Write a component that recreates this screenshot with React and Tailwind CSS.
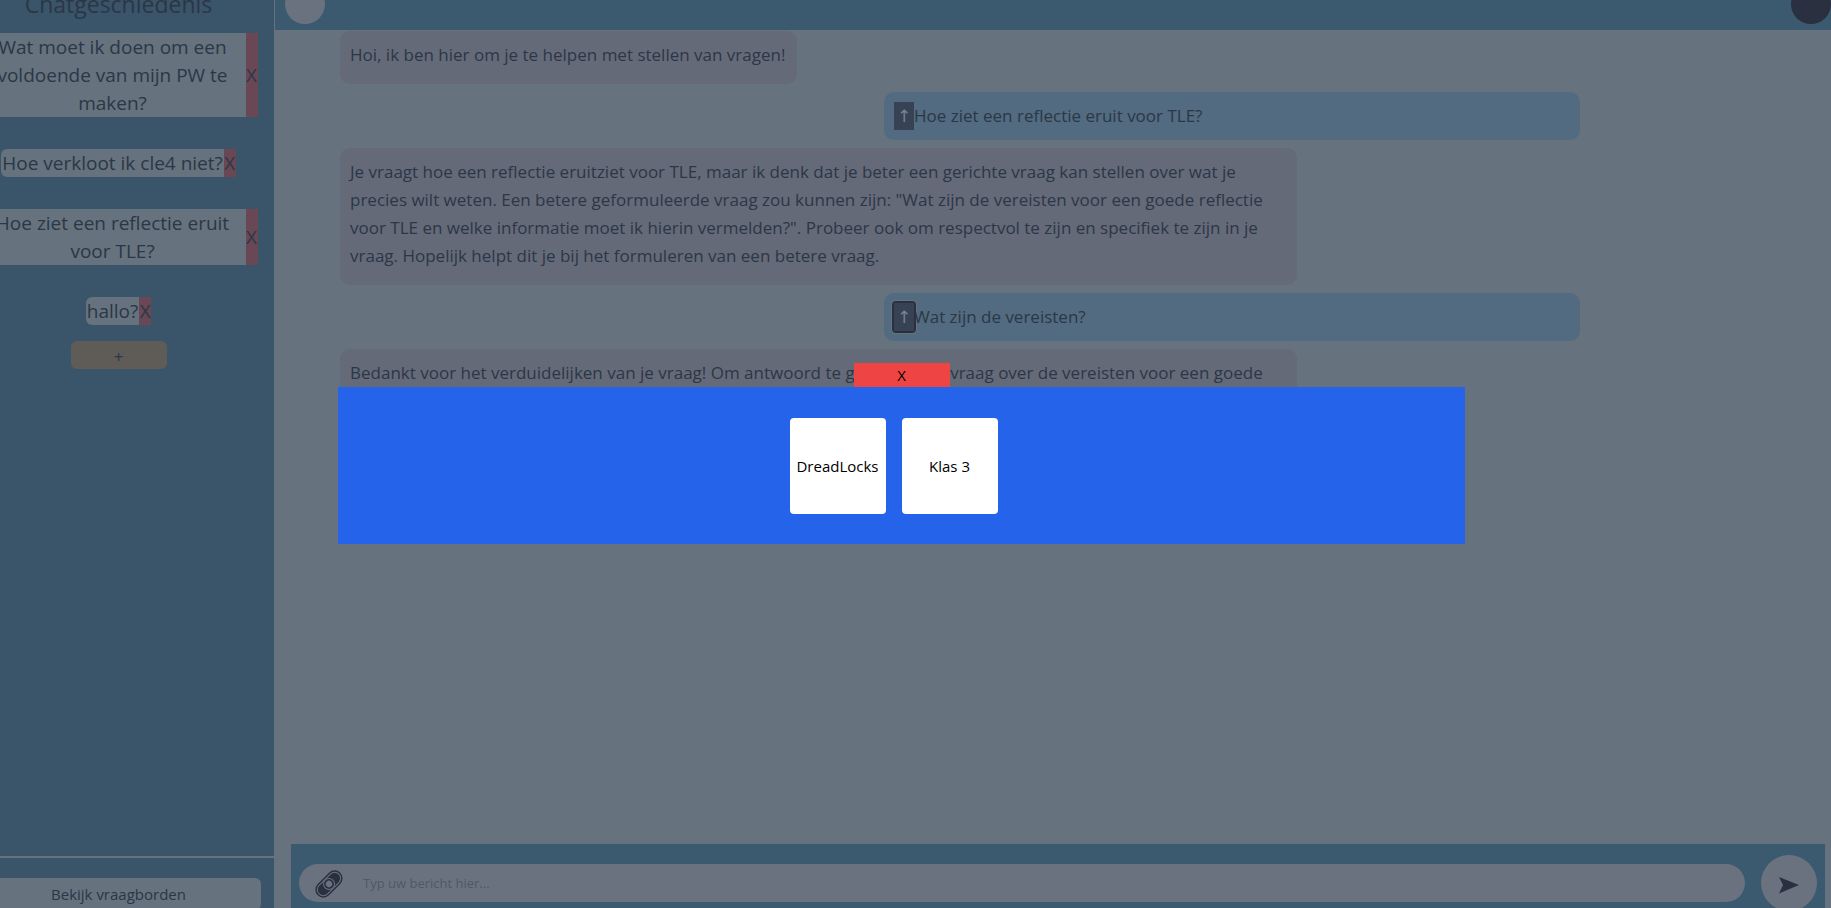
import React, { useState } from "react";

const history = [
  {
    id: 1,
    lines: ["Wat moet ik doen om een", "voldoende van mijn PW te", "maken?"],
  },
  { id: 2, lines: ["Hoe verkloot ik cle4 niet?"] },
  { id: 3, lines: ["Hoe ziet een reflectie eruit", "voor TLE?"] },
  { id: 4, lines: ["hallo?"] },
];

const messages = [
  {
    from: "bot",
    text: "Hoi, ik ben hier om je te helpen met stellen van vragen!",
  },
  { from: "user", text: "Hoe ziet een reflectie eruit voor TLE?" },
  {
    from: "bot",
    wide: true,
    text: 'Je vraagt hoe een reflectie eruitziet voor TLE, maar ik denk dat je beter een gerichte vraag kan stellen over wat je precies wilt weten. Een betere geformuleerde vraag zou kunnen zijn: "Wat zijn de vereisten voor een goede reflectie voor TLE en welke informatie moet ik hierin vermelden?". Probeer ook om respectvol te zijn en specifiek te zijn in je vraag. Hopelijk helpt dit je bij het formuleren van een betere vraag.',
  },
  { from: "user", text: "Wat zijn de vereisten?", focused: true },
  {
    from: "bot",
    wide: true,
    text: "Bedankt voor het verduidelijken van je vraag! Om antwoord te geven op uw vraag over de vereisten voor een goede",
  },
];

const boards = ["DreadLocks", "Klas 3"];

function PaperclipIcon() {
  return (
    <svg viewBox="0 0 28 28" className="size-7" fill="none" aria-hidden="true">
      <g transform="rotate(-45 14 14)">
        <rect x="-2" y="6" width="32" height="16" rx="8" fill="#2a3040" />
        <rect x="0" y="8" width="28" height="12" rx="6" stroke="#6b727f" />
        <rect x="3" y="10" width="22" height="8" rx="4" fill="#2a3040" />
        <circle cx="14" cy="14" r="5.5" fill="#2a3040" stroke="#6b727f" />
        <circle cx="14" cy="14" r="3.2" fill="#6b727f" />
      </g>
    </svg>
  );
}

function HistoryItem({ lines }) {
  return (
    <li className="flex max-w-full">
      <button
        className={
          lines.length > 1
            ? "w-[266px] bg-[#66727d] whitespace-nowrap"
            : "rounded-l-md bg-[#66727d] px-px whitespace-nowrap"
        }
      >
        {lines.map((line) => (
          <span key={line} className="block">
            {line}
          </span>
        ))}
      </button>
      <button className="w-3 bg-[#694755]">X</button>
    </li>
  );
}

function Sidebar() {
  return (
    <aside className="w-[275px] shrink-0 overflow-hidden border-r border-[#66727d] bg-[#3a5469]">
      <div className="-ml-6 flex h-full w-[285px] flex-col items-center">
        <h2 className="-mt-3 mb-3 text-[23px] leading-8">Chatgeschiedenis</h2>
        <ul className="flex flex-col items-center gap-8 pt-px text-[19px] leading-7">
          {history.map((item) => (
            <HistoryItem key={item.id} lines={item.lines} />
          ))}
        </ul>
        <button className="mt-4 h-7 w-24 rounded-md bg-[#5f5c58] pt-1 text-[17px] leading-6">
          +
        </button>
      </div>
    </aside>
  );
}

function Message({ message }) {
  if (message.from === "user") {
    return (
      <div className="flex w-[696px] max-w-full items-center self-end rounded-[10px] bg-[#526b80] p-2.5">
        <button
          className={
            message.focused
              ? "h-7 w-5 rounded-xs bg-[#374254] font-['DejaVu_Sans',sans-serif] text-[#77828e] shadow-[0_0_0_3px_#66727d] outline-2 outline-[#2a3040]"
              : "h-7 w-5 bg-[#374254] font-['DejaVu_Sans',sans-serif] text-[#77828e]"
          }
        >
          ↑
        </button>
        <p>{message.text}</p>
      </div>
    );
  }
  return (
    <div
      className={
        message.wide
          ? "w-[957px] max-w-full self-start rounded-[10px] bg-[#656a78] px-2.5 pt-2.5 pb-[15px]"
          : "self-start rounded-[10px] bg-[#656a78] pt-2.5 pr-3 pb-[15px] pl-2.5"
      }
    >
      <p>{message.text}</p>
    </div>
  );
}

function App() {
  const [text, setText] = useState("");
  const [open, setOpen] = useState(true);

  return (
    <div className="relative flex h-screen overflow-hidden bg-[#66727d] font-['Open_Sans',sans-serif] text-[#2b3747]">
      <div className="flex flex-col">
        <div className="flex min-h-0 flex-1">
          <Sidebar />
        </div>
        <div className="h-[52px] w-[274px] overflow-hidden border-t-2 border-[#6b727f] bg-[#3a5469] pt-5">
          <button className="-ml-6 h-8 w-[285px] rounded-md bg-[#66727d] text-[15px]">
            Bekijk vraagborden
          </button>
        </div>
      </div>
      <main className="flex min-w-0 flex-1 flex-col">
        <header className="flex h-[30px] shrink-0 items-end justify-between overflow-hidden bg-[#3b5a6f] pb-1.5 pl-2.5">
          <button className="size-10 rounded-full bg-[#6b727f]" aria-label="Menu" />
          <button className="size-10 rounded-full bg-[#2a3040]" aria-label="Profiel" />
        </header>
        {/* Berichten */}
        <div className="mr-[251px] ml-[65px] flex min-h-0 flex-1 flex-col gap-2 overflow-hidden pt-px text-[17px] leading-7">
          {messages.map((message, index) => (
            <Message key={index} message={message} />
          ))}
        </div>
        <form
          className="mr-1.5 ml-4 flex h-16 shrink-0 items-start gap-4 overflow-hidden bg-[#3b5a6f] px-2 pt-[11px]"
          onSubmit={(e) => e.preventDefault()}
        >
          <div className="mt-[9px] flex h-[38px] min-w-0 flex-1 items-center gap-5 rounded-full bg-[#6b727f] pt-0.5 pl-4">
            <button type="button" aria-label="Bijlage">
              <PaperclipIcon />
            </button>
            <input
              type="text"
              aria-label="Bericht"
              placeholder="Typ uw bericht hier..."
              value={text}
              onChange={(e) => setText(e.target.value)}
              className="min-w-0 flex-1 text-[13px] outline-none placeholder:text-[#4f5867]"
            />
          </div>
          <button
            className="flex size-14 shrink-0 items-center justify-center rounded-full bg-[#6b727f] pt-1"
            aria-label="Verstuur"
          >
            <svg viewBox="0 0 20 18" className="h-[18px] w-5" fill="#2a3040">
              <path d="M0 1 L20 9 L0 17.5 L4 9 Z" />
            </svg>
          </button>
        </form>
      </main>

      {/* Vraagborden */}
      {open && (
        <div className="absolute inset-0 flex flex-col items-center justify-center pr-7 pb-px text-[15px] text-black">
          <button
            className="h-6 w-24 bg-[#ef4444]"
            onClick={() => setOpen(false)}
          >
            X
          </button>
          <div className="flex h-[157px] w-5/8 items-center justify-center bg-[#2563eb] pt-px">
            {boards.map((board) => (
              <button key={board} className="mr-4 size-24 rounded-sm bg-white">
                {board}
              </button>
            ))}
          </div>
        </div>
      )}
    </div>
  );
}

export default App;
